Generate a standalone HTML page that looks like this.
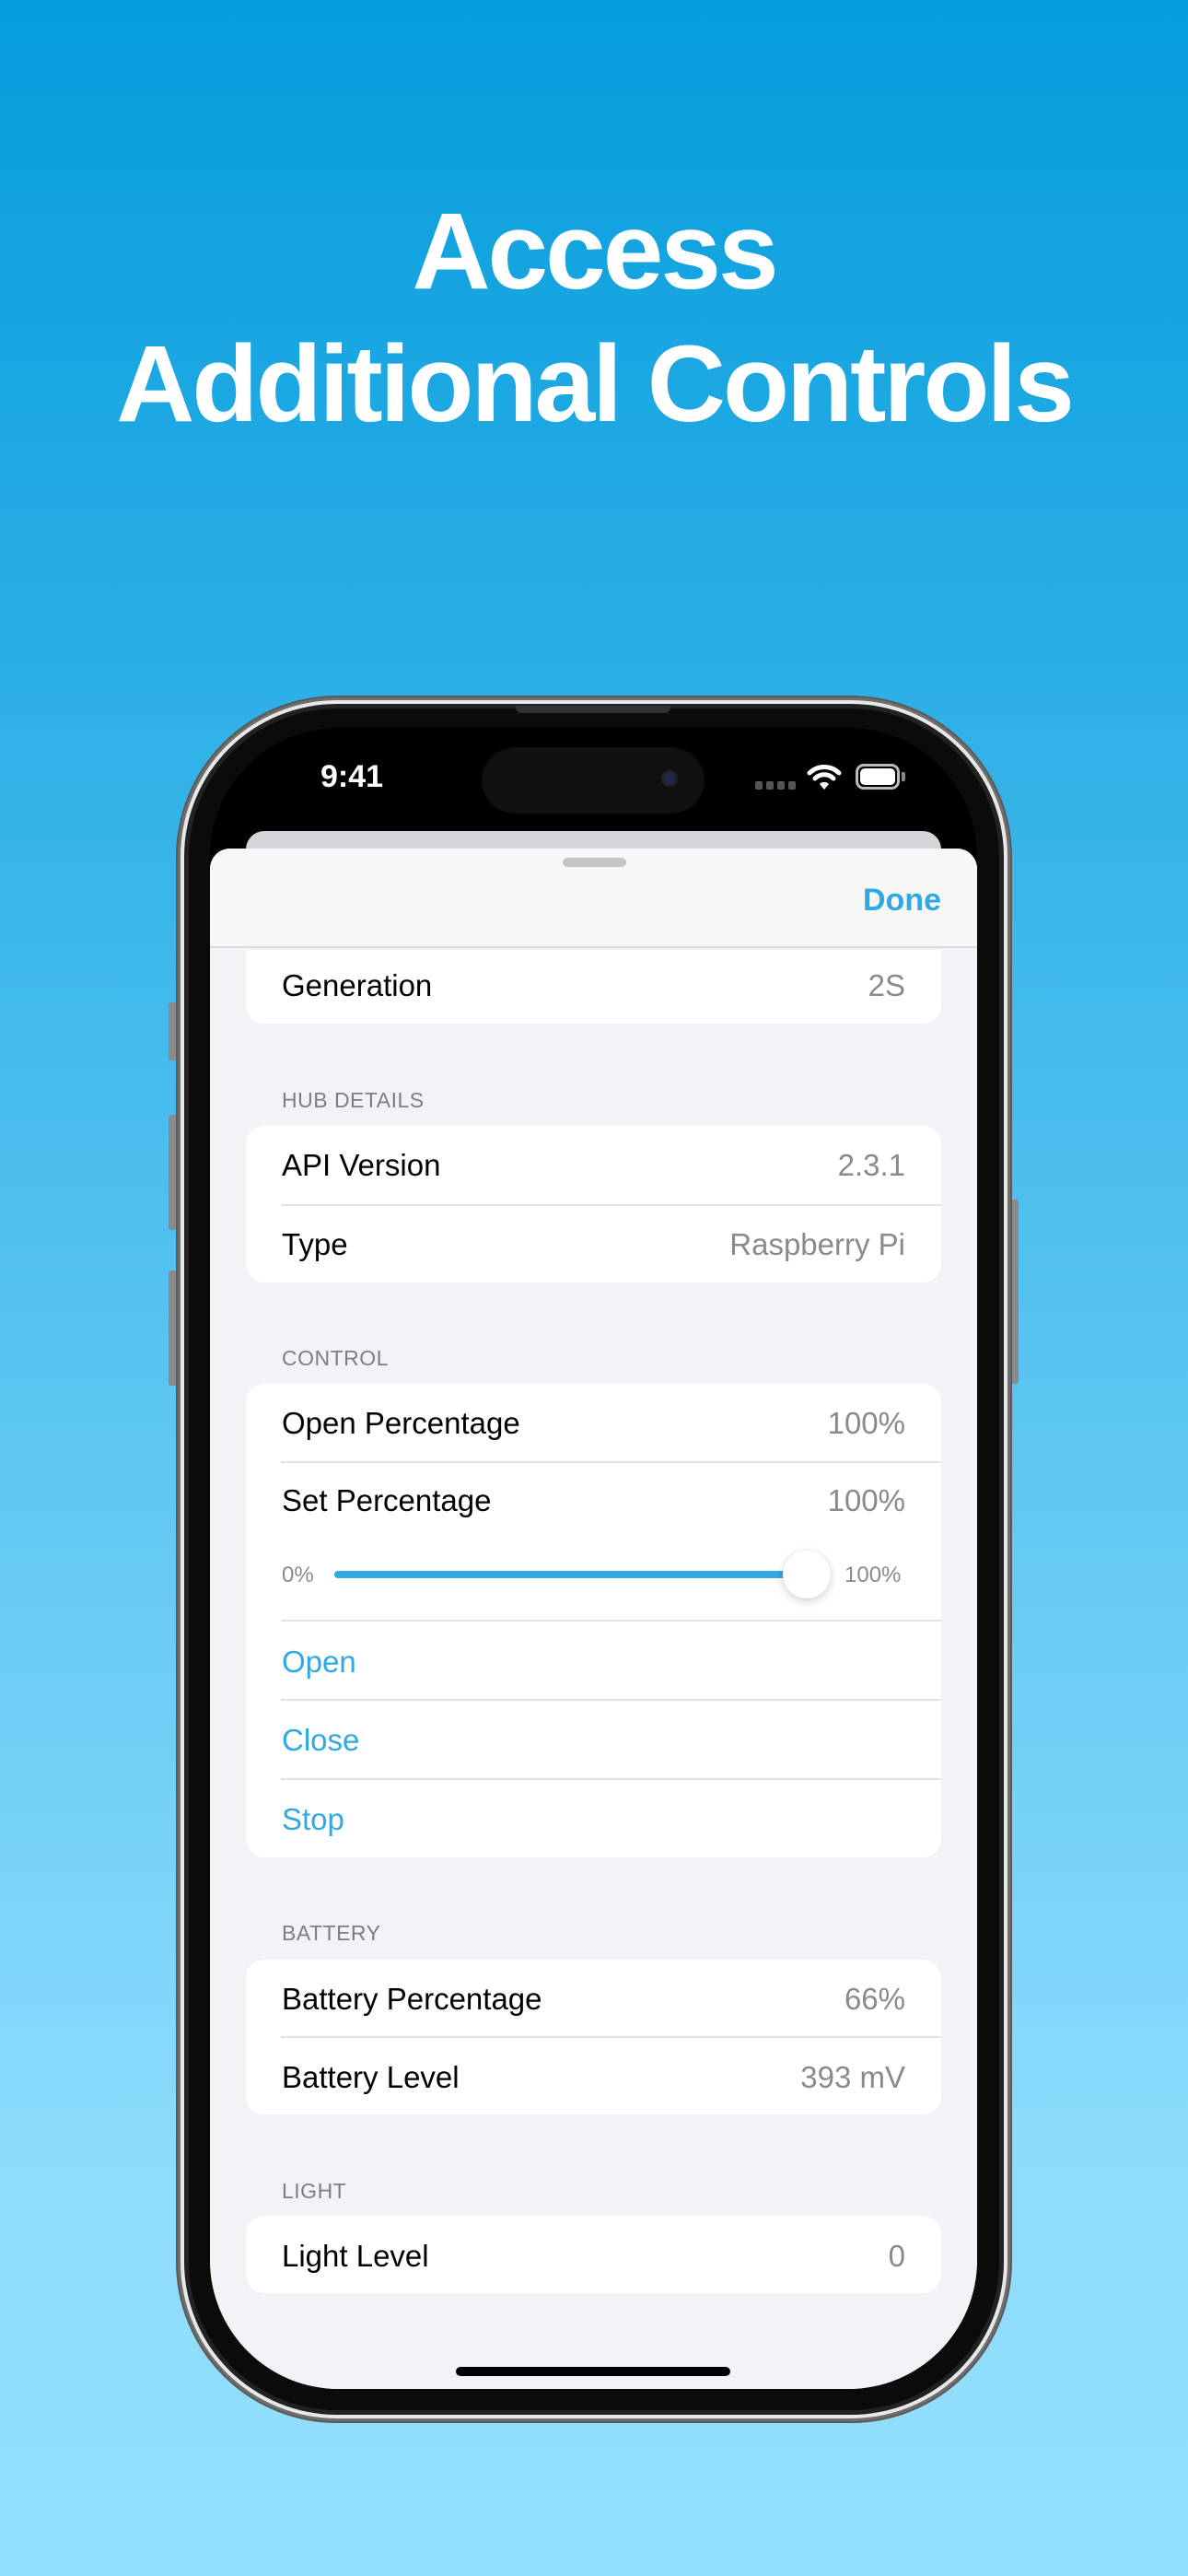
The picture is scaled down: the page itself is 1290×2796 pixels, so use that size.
<!DOCTYPE html>
<html><head><meta charset="utf-8"><style>
*{margin:0;padding:0;box-sizing:border-box}
body{width:1290px;height:2796px;position:relative;overflow:hidden;font-family:"Liberation Sans",sans-serif;background:linear-gradient(180deg,#059ddd 0%,#2aaee6 25%,#5cc6f2 55%,#8edcfc 85%,#92defd 100%)}
.t{position:absolute;left:0;width:1290px;text-align:center;color:#fff;font-weight:bold;font-size:118px;letter-spacing:-3px;line-height:118px}
.abs{position:absolute}
.card{position:absolute;left:267px;width:755px;background:#fff;border-radius:20px}
.row{position:absolute;left:39px;right:39px;font-size:33px;color:#000}
.row .v{position:absolute;right:0;top:0;color:#8a8a8e}
.div{position:absolute;left:38px;right:0;height:2px;background:#e3e3e6}
.hd{position:absolute;left:306px;font-size:23px;color:#7d7d82;letter-spacing:0.5px}
.blue{color:#2fa8e3}
</style></head><body>
<div class="t" style="top:214px">Access</div>
<div class="t" style="top:358px">Additional Controls</div>

<!-- side buttons -->
<div class="abs" style="left:183px;top:1088px;width:10px;height:63px;background:#8a8a8a;border-radius:3px"></div>
<div class="abs" style="left:183px;top:1210px;width:10px;height:125px;background:#8a8a8a;border-radius:3px"></div>
<div class="abs" style="left:183px;top:1379px;width:10px;height:125px;background:#8a8a8a;border-radius:3px"></div>
<div class="abs" style="left:1096px;top:1302px;width:10px;height:200px;background:#8a8a8a;border-radius:3px"></div>

<!-- phone -->
<div class="abs" style="left:191px;top:755px;width:908px;height:1875px;border-radius:175px;background:#6e6e6e;border:2px solid #5a5a5a"></div>
<div class="abs" style="left:196px;top:760px;width:898px;height:1865px;border-radius:170px;background:#e8e8e8"></div>
<div class="abs" style="left:200px;top:764px;width:890px;height:1857px;border-radius:166px;background:#222"></div>
<div class="abs" style="left:205px;top:769px;width:880px;height:1847px;border-radius:161px;background:#0b0b0b"></div>
<div class="abs" style="left:560px;top:766px;width:168px;height:8px;background:#333;border-radius:0 0 6px 6px"></div>
<div class="abs" style="left:228px;top:790px;width:833px;height:1803px;border-radius:140px;background:#000;overflow:hidden">
  <div class="abs" style="left:0;top:131px;width:833px;height:1700px;background:#f2f2f7;border-radius:24px 24px 0 0"></div>
</div>
<!-- status -->
<div class="abs" style="left:348px;top:824px;font-size:34px;color:#fff;font-weight:bold">9:41</div>
<div class="abs" style="left:523px;top:811px;width:242px;height:72px;background:#101010;border-radius:36px"></div>
<div class="abs" style="left:718px;top:836px;width:18px;height:18px;border-radius:50%;background:#1b2a4a;border:3px solid #222"></div>
<div class="abs" style="left:820px;top:848px;width:8px;height:9px;background:#555;border-radius:2px"></div>
<div class="abs" style="left:832px;top:848px;width:8px;height:9px;background:#555;border-radius:2px"></div>
<div class="abs" style="left:844px;top:848px;width:8px;height:9px;background:#555;border-radius:2px"></div>
<div class="abs" style="left:856px;top:848px;width:8px;height:9px;background:#555;border-radius:2px"></div>
<svg class="abs" style="left:876px;top:828px" width="38" height="30" viewBox="0 0 38 30"><path d="M3 11 A23 23 0 0 1 35 11" stroke="#fff" stroke-width="5" fill="none" stroke-linecap="round"/><path d="M9 17 A14 14 0 0 1 29 17" stroke="#fff" stroke-width="5" fill="none" stroke-linecap="round"/><path d="M14 23 L19 29 L24 23 A7 7 0 0 0 14 23Z" fill="#fff"/></svg>
<div class="abs" style="left:929px;top:829px;width:48px;height:28px;border:3px solid #bbb;border-radius:9px;padding:2px"><div style="width:100%;height:100%;background:#fff;border-radius:5px"></div></div>
<div class="abs" style="left:979px;top:838px;width:4px;height:10px;background:#888;border-radius:0 2px 2px 0"></div>

<!-- sheet -->
<div class="abs" style="left:267px;top:902px;width:755px;height:40px;background:#d5d5da;border-radius:20px 20px 0 0"></div>
<div class="abs" style="left:228px;top:921px;width:833px;height:1672px;background:#f2f2f7;border-radius:22px 22px 140px 140px;overflow:hidden">
  <div class="abs" style="left:0;top:0;width:833px;height:108px;background:#f7f7f7;border-bottom:2px solid #dcdcdf"></div>
</div>
<div class="abs" style="left:611px;top:931px;width:69px;height:10px;background:#c4c4c6;border-radius:5px"></div>
<div class="abs blue" style="right:268px;top:958px;font-size:34px;font-weight:bold">Done</div>

<!-- card 1 -->
<div class="card" style="top:1031px;height:80px;border-radius:0 0 20px 20px">
  <div class="row" style="top:20px">Generation<span class="v">2S</span></div>
</div>

<div class="hd" style="top:1181px">HUB DETAILS</div>
<div class="card" style="top:1222px;height:170px">
  <div class="row" style="top:24px">API Version<span class="v">2.3.1</span></div>
  <div class="div" style="top:85px"></div>
  <div class="row" style="top:110px">Type<span class="v">Raspberry Pi</span></div>
</div>

<div class="hd" style="top:1461px">CONTROL</div>
<div class="card" style="top:1502px;height:514px">
  <div class="row" style="top:24px">Open Percentage<span class="v">100%</span></div>
  <div class="div" style="top:84px"></div>
  <div class="row" style="top:108px">Set Percentage<span class="v">100%</span></div>
  <div class="abs" style="left:39px;top:194px;font-size:24px;color:#8a8a8e">0%</div>
  <div class="abs" style="left:96px;top:203px;width:530px;height:8px;background:#31a9e2;border-radius:4px"></div>
  <div class="abs" style="left:583px;top:181px;width:52px;height:52px;background:#fff;border-radius:50%;box-shadow:0 3px 10px rgba(0,0,0,0.18),0 0 1px rgba(0,0,0,0.15)"></div>
  <div class="abs" style="left:650px;top:194px;font-size:24px;color:#8a8a8e">100%</div>
  <div class="div" style="top:256px"></div>
  <div class="row blue" style="top:283px">Open</div>
  <div class="div" style="top:342px"></div>
  <div class="row blue" style="top:368px">Close</div>
  <div class="div" style="top:428px"></div>
  <div class="row blue" style="top:454px">Stop</div>
</div>

<div class="hd" style="top:2085px">BATTERY</div>
<div class="card" style="top:2127px;height:168px">
  <div class="row" style="top:24px">Battery Percentage<span class="v">66%</span></div>
  <div class="div" style="top:83px"></div>
  <div class="row" style="top:109px">Battery Level<span class="v">393 mV</span></div>
</div>

<div class="hd" style="top:2365px">LIGHT</div>
<div class="card" style="top:2405px;height:84px">
  <div class="row" style="top:25px">Light Level<span class="v">0</span></div>
</div>

<div class="abs" style="left:495px;top:2569px;width:298px;height:10px;background:#000;border-radius:5px"></div>
</body></html>
